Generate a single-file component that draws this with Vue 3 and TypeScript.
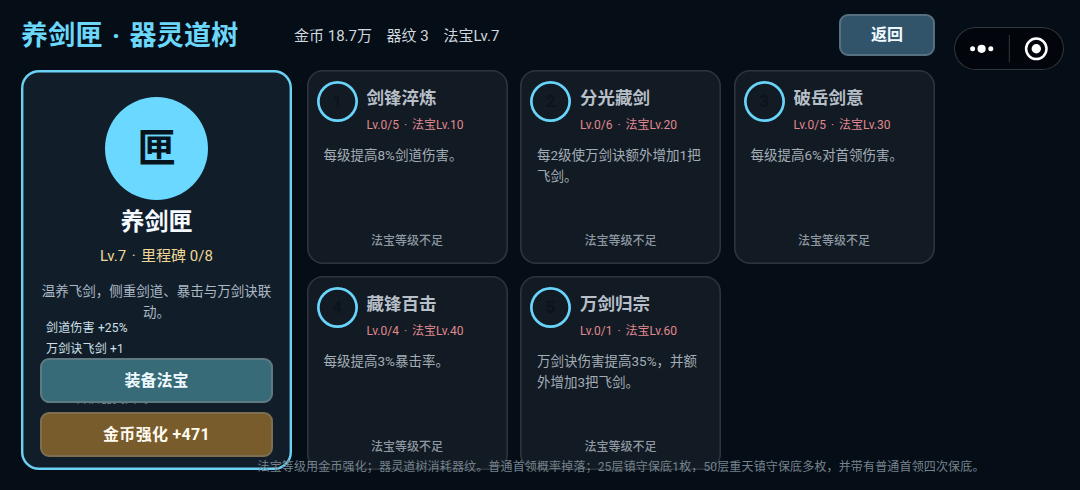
<script setup lang="ts">
interface Skill {
  id: number
  name: string
  level: string
  need: string
  lines: string[]
}

const skills: Skill[] = [
  { id: 1, name: '剑锋淬炼', level: 'Lv.0/5', need: '法宝Lv.10', lines: ['每级提高8%剑道伤害。'] },
  { id: 2, name: '分光藏剑', level: 'Lv.0/6', need: '法宝Lv.20', lines: ['每2级使万剑诀额外增加1把', '飞剑。'] },
  { id: 3, name: '破岳剑意', level: 'Lv.0/5', need: '法宝Lv.30', lines: ['每级提高6%对首领伤害。'] },
  { id: 4, name: '藏锋百击', level: 'Lv.0/4', need: '法宝Lv.40', lines: ['每级提高3%暴击率。'] },
  { id: 5, name: '万剑归宗', level: 'Lv.0/1', need: '法宝Lv.60', lines: ['万剑诀伤害提高35%，并额', '外增加3把飞剑。'] },
]
</script>

<template>
  <div class="screen">
    <header class="top">
      <h1 class="title">养剑匣<span class="sep">·</span>器灵道树</h1>
      <div class="wallet">
        <span class="coin">金币 18.7万</span><span class="rune">器纹 3</span><span>法宝Lv.7</span>
      </div>
      <button class="back">返回</button>
    </header>

    <div class="capsule">
      <svg width="110" height="43" viewBox="0 0 110 43">
        <circle cx="18.6" cy="21.8" r="2.5" fill="#fff" />
        <circle cx="27.6" cy="21.8" r="4.1" fill="#fff" />
        <circle cx="36.8" cy="21.8" r="2.5" fill="#fff" />
        <path d="M55.3 8V35.5" stroke="#34393e" stroke-width="1" />
        <circle cx="82.3" cy="21.8" r="10.2" fill="none" stroke="#fff" stroke-width="2.5" />
        <circle cx="82.3" cy="21.8" r="4.7" fill="#fff" />
      </svg>
    </div>

    <main class="body">
      <section class="artifact">
        <div class="emblem">匣</div>
        <div class="name">养剑匣</div>
        <div class="rank">Lv.7<i>·</i>里程碑 0/8</div>
        <div class="about">温养飞剑，侧重剑道、暴击与万剑诀联<br />动。</div>
        <ul class="stats">
          <li>剑道伤害 +25%</li>
          <li>万剑诀飞剑 +1</li>
        </ul>
        <div class="actions">
          <span class="unlock">Lv.10 开启器灵共鸣</span>
          <button class="btn equip">装备法宝</button>
          <button class="btn upgrade">金币强化 +471</button>
        </div>
      </section>

      <section class="grid">
        <article v-for="s in skills" :key="s.id" class="card">
          <div class="head">
            <div class="ring">{{ s.id }}</div>
            <div>
              <div class="skill">{{ s.name }}</div>
              <div class="need">{{ s.level }}<i>·</i>{{ s.need }}</div>
            </div>
          </div>
          <div class="desc">
            <div v-for="line in s.lines" :key="line">{{ line }}</div>
          </div>
          <div class="state">法宝等级不足</div>
        </article>
      </section>
    </main>

    <p class="note">法宝等级用金币强化；器灵道树消耗器纹。普通首领概率掉落；25层镇守保底1枚，50层重天镇守保底多枚，并带有普通首领四次保底。</p>
  </div>
</template>

<style>
body {
  margin: 0;
  background: #050e17;
}
</style>

<style scoped>
.screen {
  position: relative;
  box-sizing: border-box;
  width: 1080px;
  height: 490px;
  padding: 14px 0 0 21px;
  overflow: hidden;
  background: #050e17;
  font-family: Roboto, "Noto Sans CJK SC", sans-serif;
  white-space: nowrap;
}
.top {
  display: flex;
  align-items: center;
  width: 914px;
  height: 42px;
}
.title {
  width: 273px;
  margin: 0;
  padding-top: 2px;
  color: #6bd7fb;
  font-size: 27px;
  line-height: 42px;
  font-weight: 700;
  letter-spacing: 0.2px;
}
.sep {
  display: inline-block;
  width: 27px;
  text-align: center;
}
.wallet {
  flex: 1;
  padding-top: 1px;
  color: #d0d7de;
  font-size: 15px;
  line-height: 42px;
}
.coin {
  display: inline-block;
  width: 92.5px;
}
.rune {
  display: inline-block;
  width: 57px;
}
.back {
  box-sizing: border-box;
  width: 96px;
  height: 42px;
  padding: 0;
  border: 2px solid #567080;
  border-radius: 9px;
  background: #32546b;
  color: #effaff;
  font: 700 16px/38px Roboto, "Noto Sans CJK SC", sans-serif;
}
.capsule {
  position: absolute;
  left: 954px;
  top: 27px;
  box-sizing: border-box;
  width: 110px;
  height: 43px;
  border-radius: 22px;
  background: #02060c;
  box-shadow: inset 0 0 0 1px #32373c;
}
.capsule svg {
  display: block;
}
.body {
  display: flex;
  gap: 14.5px;
  padding-top: 14px;
}
.artifact {
  box-sizing: border-box;
  display: flex;
  flex-direction: column;
  align-items: center;
  width: 271px;
  height: 400px;
  padding-top: 27px;
  border-radius: 18px;
  background: #111e2a;
  box-shadow: inset 0 0 0 2.4px #6bd2f5;
}
.emblem {
  width: 103px;
  height: 103px;
  border-radius: 50%;
  background: #6ad8ff;
  color: #061420;
  font-size: 38px;
  line-height: 103px;
  font-weight: 700;
  text-align: center;
}
.name {
  margin-top: 7px;
  color: #f4faff;
  font-size: 24px;
  line-height: 30px;
  font-weight: 700;
}
.rank {
  margin-top: 9px;
  color: #efd795;
  font-size: 15px;
  line-height: 20px;
}
.rank i {
  display: inline-block;
  width: 15px;
  font-style: normal;
  text-align: center;
}
.about {
  margin-top: 15px;
  color: #abb9c4;
  font-size: 13.5px;
  line-height: 20.5px;
  text-align: center;
}
.stats {
  align-self: stretch;
  margin: -4.5px 0 0 25px;
  padding: 0;
  list-style: none;
  color: #cfe0e8;
  font-size: 12px;
  line-height: 21.5px;
  letter-spacing: 0.18px;
}
.actions {
  position: relative;
  display: flex;
  flex-direction: column;
  gap: 9px;
  margin-top: -2.5px;
}
.unlock {
  position: absolute;
  left: 6px;
  top: 32px;
  color: #77848e;
  font-size: 12px;
  line-height: 18px;
}
.btn {
  position: relative;
  box-sizing: border-box;
  width: 233px;
  height: 45px;
  padding: 0;
  border: 2px solid #5f7a83;
  border-radius: 9px;
  background: #376b77;
  color: #effaff;
  font: 700 16px/41px Roboto, "Noto Sans CJK SC", sans-serif;
}
.upgrade {
  border-color: #7d7052;
  background: #785c2c;
  color: #fffaf0;
  letter-spacing: 0.3px;
}
.grid {
  display: grid;
  grid-template-columns: repeat(3, 201px);
  grid-auto-rows: 194px;
  gap: 12px 12.5px;
}
.card {
  box-sizing: border-box;
  display: flex;
  flex-direction: column;
  padding: 1px;
  border-radius: 16px;
  background: #121a23;
  box-shadow: inset 0 0 0 1.6px #2d343c;
}
.head {
  display: flex;
  gap: 9px;
  padding: 10px 0 0 9px;
}
.ring {
  box-sizing: border-box;
  width: 41px;
  height: 41px;
  border-radius: 50%;
  box-shadow: inset 0 0 0 2.7px #68d4fa;
  color: #0b131b;
  font-size: 16px;
  line-height: 41px;
  font-weight: 700;
  text-align: center;
}
.skill {
  margin-top: 5px;
  color: #b7bfc8;
  font-size: 17.5px;
  line-height: 24px;
  font-weight: 700;
}
.need {
  margin-top: 6px;
  color: #e08990;
  font-size: 12px;
  line-height: 18px;
}
.need i {
  display: inline-block;
  width: 13px;
  font-style: normal;
  text-align: center;
}
.desc {
  flex: 1;
  padding: 11px 0 0 16px;
  color: #a2adb6;
  font-size: 13.5px;
  line-height: 20.5px;
}
.state {
  padding-bottom: 13px;
  color: #8d98a2;
  font-size: 12px;
  line-height: 18px;
  font-weight: 500;
  text-align: center;
}
.note {
  position: absolute;
  left: 257.5px;
  top: 458px;
  margin: 0;
  color: #75828d;
  font-size: 12px;
  line-height: 18px;
  letter-spacing: 0.15px;
}
</style>
